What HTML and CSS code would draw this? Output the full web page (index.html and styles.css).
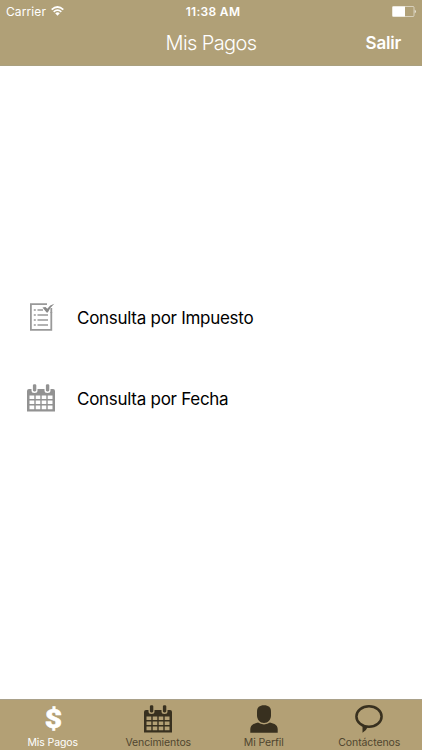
FILE: index.html
```html
<!DOCTYPE html>
<html lang="es">
  <head>
    <meta charset="utf-8">
    <meta name="viewport" content="width=device-width, initial-scale=1.0">
    <title>Mis Pagos</title>
    <link rel="stylesheet" href="styles.css">
  </head>
  <body>
    <svg class="defs" width="0" height="0">
      <symbol id="calendar" viewBox="0 0 28 28">
        <path fill="currentColor" fill-rule="evenodd" d="M2 5H4.500V6.500Q4.500 9 7.500 9T10.500 6.500V5H17.500V6.500Q17.500 9 20.500 9T23.500 6.500V5H26Q28 5 28 7V27.500H0V7Q0 5 2 5ZM2.500 11.500V15H7.300V11.500ZM8.700 11.500V15H13.300V11.500ZM14.700 11.500V15H19.300V11.500ZM20.700 11.500V15H25.500V11.500ZM2.500 16.400V20H7.300V16.400ZM8.700 16.400V20H13.300V16.400ZM14.700 16.400V20H19.300V16.400ZM20.700 16.400V20H25.500V16.400ZM2.500 21.400V25.200H7.300V21.400ZM8.700 21.400V25.200H13.300V21.400ZM14.700 21.400V25.200H19.300V21.400ZM20.700 21.400V25.200H25.500V21.400Z"/>
        <rect x="5.900" y="0.200" width="3.400" height="7.200" rx="1.300" fill="currentColor"/>
        <rect x="18.900" y="0.200" width="3.400" height="7.200" rx="1.300" fill="currentColor"/>
      </symbol>
    </svg>

    <header class="header">
      <div class="status">
        <div class="carrier">
          <span>Carrier</span>
          <svg class="wifi" width="13" height="10" viewBox="0 0 13 10" fill="none" stroke="#fff" stroke-width="1.700">
            <path d="M0.700 3.700Q6.500 -1.700 12.300 3.700M2.700 5.900Q6.500 2.400 10.300 5.900"/>
            <path d="M4.200 7.300Q6.500 5.300 8.800 7.300L6.500 9.700Z" fill="#fff" stroke="none"/>
          </svg>
        </div>
        <span class="time">11:38 AM</span>
        <svg class="battery" width="25" height="11" viewBox="0 0 25 11">
          <rect x="1.500" y="0.500" width="21.500" height="10" rx="1" fill="none" stroke="#fff" stroke-opacity="0.500"/>
          <rect x="1.500" y="0.500" width="12.500" height="10" fill="#fff"/>
          <path d="M23.800 3.500Q25.500 5.500 23.800 7.500Z" fill="#fff"/>
        </svg>
      </div>
      <div class="navbar">
        <h1 class="title">Mis Pagos</h1>
        <a class="logout">Salir</a>
      </div>
    </header>

    <main class="menu">
      <a class="option">
        <svg class="option-icon" width="28" height="28" viewBox="0 0 28 28" fill="none" stroke="#999">
          <path d="M20 1.200H3.900V26.800H24.300V9" stroke-width="1.800"/>
          <path d="M24.300 5V10" stroke-width="1.800"/>
          <path d="M10.500 7H16M10.500 12H21M10.500 17H21M10.500 22H21" stroke-width="1.400"/>
          <path d="M6.800 7H8.800M6.800 12H8.800M6.800 17H8.800M6.800 22H8.800" stroke-width="1.700"/>
          <path d="M15.500 4.500L18.500 4L20.300 5.800Q22.800 2 27.300 0.800Q23.500 4 20.800 9.500H19.600Z" fill="#888" stroke="none"/>
        </svg>
        <span>Consulta por Impuesto</span>
      </a>
      <a class="option">
        <svg class="option-icon" width="28" height="28"><use href="#calendar"/></svg>
        <span>Consulta por Fecha</span>
      </a>
    </main>

    <nav class="tabbar">
      <a class="tab active">
        <span class="dollar">$</span>
        <span class="label">Mis Pagos</span>
      </a>
      <a class="tab">
        <svg class="tab-icon" width="28" height="28"><use href="#calendar"/></svg>
        <span class="label">Vencimientos</span>
      </a>
      <a class="tab">
        <svg class="tab-icon" width="28" height="28" viewBox="0 0 28 28" fill="currentColor">
          <path d="M14 0.300C18.500 0.300 21 2.500 21 6.500V10.500C21 14.500 18 18 14 18S7 14.500 7 10.500V6.500C7 2.500 9.500 0.300 14 0.300Z"/>
          <path d="M8 17.600Q10.500 19.400 14 19.400T20 17.600L24.500 19Q27.500 20.500 27.700 24V27.700H0.300V24Q0.500 20.500 3.500 19Z"/>
        </svg>
        <span class="label">Mi Perfil</span>
      </a>
      <a class="tab">
        <svg class="tab-icon" width="28" height="28" viewBox="0 0 28 28">
          <path d="M7.500 20V27.800Q11.500 25.500 13 21.500Z" fill="currentColor"/>
          <ellipse cx="14" cy="11.500" rx="12.600" ry="10.200" fill="none" stroke="currentColor" stroke-width="2.500"/>
        </svg>
        <span class="label">Contáctenos</span>
      </a>
    </nav>
  </body>
</html>
```
FILE: styles.css
```css
* {
  box-sizing: border-box;
}
body {
  margin: 0;
  height: 750px;
  display: flex;
  flex-direction: column;
  background: #fff;
  color: #000;
  font-family: Inter, "Liberation Sans", sans-serif;
  white-space: nowrap;
  overflow: hidden;
}
.defs {
  position: absolute;
}
.header {
  height: 66px;
  background: #b0a077;
  border-bottom: 1px solid #aaa07f;
  color: #fff;
}
.status {
  height: 22px;
  padding: 0 6px 0 6px;
  display: grid;
  grid-template-columns: 1fr auto 1fr;
  align-items: center;
  font-size: 12px;
}
.carrier {
  display: flex;
  align-items: center;
  gap: 5px;
  letter-spacing: 0.1px;
}
.wifi {
  margin-bottom: 1px;
}
.time {
  padding-left: 4px;
  font-weight: 600;
  letter-spacing: 0.3px;
}
.battery {
  justify-self: end;
}
.navbar {
  height: 42px;
  padding: 0 21px;
  display: grid;
  grid-template-columns: 1fr auto 1fr;
  align-items: center;
}
.title {
  grid-column: 2;
  margin: 0;
  font-size: 20px;
  font-weight: 300;
  letter-spacing: -0.6px;
}
.logout {
  justify-self: end;
  font-size: 17px;
  font-weight: 600;
  letter-spacing: -0.2px;
}
.menu {
  flex: 1;
  padding: 210px 27px 0;
}
.option {
  height: 81px;
  display: flex;
  align-items: center;
  gap: 22px;
  font-size: 17px;
  letter-spacing: -0.28px;
}
.option span {
  padding-top: 2px;
}
.option-icon {
  color: #929292;
}
.tabbar {
  height: 51px;
  display: grid;
  grid-template-columns: repeat(4, 1fr);
  background: #b3a075;
  border-top: 1px solid #aaa18a;
  color: #38301f;
}
.tab {
  display: flex;
  flex-direction: column;
  align-items: center;
  padding-top: 5px;
}
.tab .label {
  font-size: 10.500px;
  line-height: 14px;
  margin-top: 3px;
  letter-spacing: -0.1px;
  color: #50462f;
}
.dollar {
  height: 28px;
  margin-left: 1px;
  font-family: Roboto, sans-serif;
  font-size: 26px;
  line-height: 29px;
  font-weight: 900;
  -webkit-text-stroke: 0.5px #fff;
  transform: scaleX(1.15);
}
.tab.active,
.active .label {
  color: #fff;
}
```
